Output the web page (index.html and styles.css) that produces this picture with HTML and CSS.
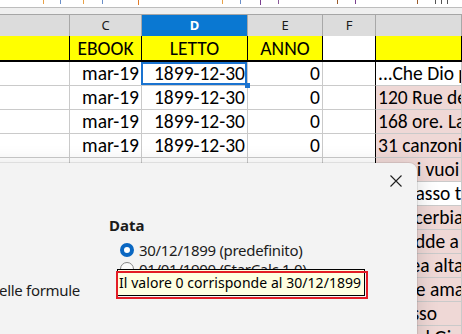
FILE: index.html
```html
<!DOCTYPE html>
<html lang="it">

<head>
  <meta charset="UTF-8">
  <title>Opzioni - Calcola</title>
  <link rel="stylesheet" href="styles.css">
</head>

<body>
  <div class="app">
    <svg class="toolbar-edge" width="462" height="7" viewBox="0 0 462 7">
      <rect x="43" y="0" width="1" height="4" fill="#e8a24a" />
      <rect x="60" y="0" width="1" height="4" fill="#6a8fc8" />
      <rect x="83" y="0" width="1" height="4" fill="#e8a24a" />
      <rect x="102" y="0" width="1" height="4" fill="#6a8fc8" />
      <rect x="138" y="0" width="1" height="5" fill="#e07b2a" />
      <rect x="222" y="0" width="1" height="4" fill="#e8a24a" />
      <rect x="240" y="0" width="1" height="4" fill="#6a8fc8" />
      <rect x="260" y="0" width="1" height="5" fill="#7a3f8f" />
      <rect x="278" y="0" width="1" height="4" fill="#8b5a9a" />
      <rect x="337" y="0" width="1" height="4" fill="#9a5a2a" />
      <rect x="355" y="0" width="1" height="4" fill="#7a3f8f" />
      <rect x="417" y="0" width="1" height="4" fill="#9a5a2a" />
      <rect x="435" y="0" width="1" height="4" fill="#555" />
      <rect x="441" y="0" width="1" height="4" fill="#555" />
      <rect x="447" y="0" width="1" height="4" fill="#555" />
    </svg>
    <div class="formula-gap"></div>

    <div class="sheet">
      <div class="row head">
        <div class="cell"></div>
        <div class="cell">C</div>
        <div class="cell sel">D</div>
        <div class="cell">E</div>
        <div class="cell">F</div>
        <div class="cell"></div>
      </div>
      <div class="row titles">
        <div class="cell"></div>
        <div class="cell">EBOOK</div>
        <div class="cell">LETTO</div>
        <div class="cell">ANNO</div>
        <div class="cell blank"></div>
        <div class="cell"></div>
      </div>
      <div class="row data">
        <div class="cell"></div>
        <div class="cell num">mar-19</div>
        <div class="cell num cursor">1899-12-30</div>
        <div class="cell num">0</div>
        <div class="cell edge"></div>
        <div class="cell txt">...Che Dio perdona a tutti</div>
      </div>
      <div class="row data">
        <div class="cell"></div>
        <div class="cell num">mar-19</div>
        <div class="cell num">1899-12-30</div>
        <div class="cell num">0</div>
        <div class="cell edge"></div>
        <div class="cell txt pink">120 Rue de la Gare</div>
      </div>
      <div class="row data">
        <div class="cell"></div>
        <div class="cell num">mar-19</div>
        <div class="cell num">1899-12-30</div>
        <div class="cell num">0</div>
        <div class="cell edge"></div>
        <div class="cell txt pink">168 ore. La notte</div>
      </div>
      <div class="row data">
        <div class="cell"></div>
        <div class="cell num">mar-19</div>
        <div class="cell num">1899-12-30</div>
        <div class="cell num">0</div>
        <div class="cell edge"></div>
        <div class="cell txt pink">31 canzoni</div>
      </div>
      <div class="row data">
        <div class="cell"></div>
        <div class="cell"></div>
        <div class="cell"></div>
        <div class="cell"></div>
        <div class="cell edge"></div>
        <div class="cell txt pink">Se mi vuoi bene</div>
      </div>
      <div class="row data">
        <div class="cell"></div>
        <div class="cell"></div>
        <div class="cell"></div>
        <div class="cell"></div>
        <div class="cell edge"></div>
        <div class="cell txt">Un passo troppo</div>
      </div>
      <div class="row data">
        <div class="cell"></div>
        <div class="cell"></div>
        <div class="cell"></div>
        <div class="cell"></div>
        <div class="cell edge"></div>
        <div class="cell txt pink">Una cerbiatta</div>
      </div>
      <div class="row data">
        <div class="cell"></div>
        <div class="cell"></div>
        <div class="cell"></div>
        <div class="cell"></div>
        <div class="cell edge"></div>
        <div class="cell txt pink">Accadde a Roma</div>
      </div>
      <div class="row data">
        <div class="cell"></div>
        <div class="cell"></div>
        <div class="cell"></div>
        <div class="cell"></div>
        <div class="cell edge"></div>
        <div class="cell txt pink">Marea alta</div>
      </div>
      <div class="row data">
        <div class="cell"></div>
        <div class="cell"></div>
        <div class="cell"></div>
        <div class="cell"></div>
        <div class="cell edge"></div>
        <div class="cell txt pink">Sole e amare</div>
      </div>
      <div class="row data">
        <div class="cell"></div>
        <div class="cell"></div>
        <div class="cell"></div>
        <div class="cell"></div>
        <div class="cell edge"></div>
        <div class="cell txt pink">Il passo</div>
      </div>
      <div class="row data">
        <div class="cell"></div>
        <div class="cell"></div>
        <div class="cell"></div>
        <div class="cell"></div>
        <div class="cell edge"></div>
        <div class="cell txt pink">Un Bel Giorno</div>
      </div>
    </div>

    <div class="dialog">
      <div class="titlebar">
        <svg class="close" width="12" height="12" viewBox="0 0 12 12">
          <path d="M0.5 0.5 L11.5 11.5 M11.5 0.5 L0.5 11.5" stroke="#1f1f1f" stroke-width="1.1" fill="none" />
        </svg>
      </div>
      <div class="body">
        <div class="left">
          <div class="label">Abilita i caratteri jolly nelle formule</div>
        </div>
        <div class="right">
          <div class="heading">Data</div>
          <div class="radios">
            <div class="radio checked"><span class="dot"></span>30/12/1899 (predefinito)</div>
            <div class="radio"><span class="dot"></span>01/01/1900 (StarCalc 1.0)</div>
            <div class="radio"><span class="dot"></span>01/01/1904</div>
          </div>
        </div>
      </div>
    </div>

    <div class="tooltip">Il valore 0 corrisponde al 30/12/1899</div>
  </div>
</body>

</html>
```

FILE: styles.css
```css
body {
  margin: 0;
  background: #fff;
}

.app {
  position: relative;
  width: 462px;
  height: 334px;
  overflow: hidden;
  font-family: Carlito, Lato, "Liberation Sans", sans-serif;
  color: #000;
}

.toolbar-edge {
  display: block;
}

.formula-gap {
  height: 6px;
  background: #efefef;
  border-top: 1px solid #bdbdbd;
  border-bottom: 1px solid #a6a6a6;
}

.row {
  display: grid;
  grid-template-columns: 70px 72px 106px 75px 53px 1fr;
}

.cell {
  box-sizing: border-box;
  height: 24px;
  padding: 0 2px;
  border-right: 1px solid #cacaca;
  border-bottom: 1px solid #cacaca;
  font-size: 19.5px;
  line-height: 23px;
  white-space: nowrap;
  overflow: hidden;
}

.head .cell {
  height: 21px;
  border-bottom: 0;
  border-right-color: #a8a8a8;
  background: #dcdcdc;
  font: 13px/21px "Noto Sans", sans-serif;
  text-align: center;
  color: #1a1a1a;
}

.head .sel {
  background: #0a78d2;
  color: #fff;
  font-weight: bold;
}

.titles .cell {
  height: 26px;
  background: #ffff00;
  border-right-color: #000;
  border-bottom: 2px solid #000;
  line-height: 24px;
  text-align: center;
}

.titles .blank {
  background: #fff;
}

.num {
  text-align: right;
}

.edge {
  border-right-color: #000;
}

.txt {
  padding-left: 2px;
}

.pink {
  background: #efd8d6;
}

.cursor {
  position: relative;
  overflow: visible;
}

.cursor::after {
  content: "";
  position: absolute;
  left: -1px;
  top: 0;
  right: 0;
  bottom: 0;
  border: 2px solid #1a73d0;
}

.cursor::before {
  content: "";
  position: absolute;
  right: -3px;
  bottom: -3px;
  width: 5px;
  height: 5px;
  background: #1a73d0;
  z-index: 1;
}

/* dialog over the sheet */
.dialog {
  position: absolute;
  left: -140px;
  top: 163px;
  width: 557px;
  height: 200px;
  background: #f3f3f3;
  border-top-right-radius: 8px;
  box-shadow: 0 0 0 1px rgba(0, 0, 0, .08), 0 4px 22px rgba(0, 0, 0, .16);
  font-family: "Noto Sans", sans-serif;
  font-size: 15px;
  letter-spacing: -0.3px;
  color: #1b1b1b;
}

.titlebar {
  display: flex;
  justify-content: flex-end;
  align-items: center;
  height: 36px;
  padding-right: 15px;
}

.body {
  display: grid;
  grid-template-columns: 220px 1fr;
  column-gap: 29px;
}

.label {
  padding-top: 81px;
  line-height: 20px;
  text-align: right;
  white-space: nowrap;
  direction: rtl;
}

.right {
  padding-top: 16px;
}

.heading {
  font-weight: bold;
  line-height: 20px;
  letter-spacing: 0;
}

.radios {
  margin-top: 5px;
  padding-left: 11px;
}

.radio {
  display: flex;
  align-items: center;
  gap: 5px;
  height: 19px;
  white-space: nowrap;
}

.dot {
  box-sizing: border-box;
  flex: none;
  width: 14px;
  height: 14px;
  border-radius: 50%;
  border: 1px solid #878787;
  background: #fbfbfb;
}

.checked .dot {
  border: 4px solid #0a67c2;
  background: #fff;
}

.tooltip {
  position: absolute;
  left: 117px;
  top: 269px;
  box-sizing: border-box;
  width: 248px;
  height: 27px;
  padding-left: 1px;
  border: 1px solid #000;
  background: #ffffe1;
  font: 14px/25px "Noto Sans", sans-serif;
  letter-spacing: 0.05px;
  white-space: nowrap;
}

.tooltip::after {
  content: "";
  position: absolute;
  left: -2px;
  top: 1px;
  right: -4px;
  bottom: -4px;
  border: 2px solid #e31c25;
}
```
